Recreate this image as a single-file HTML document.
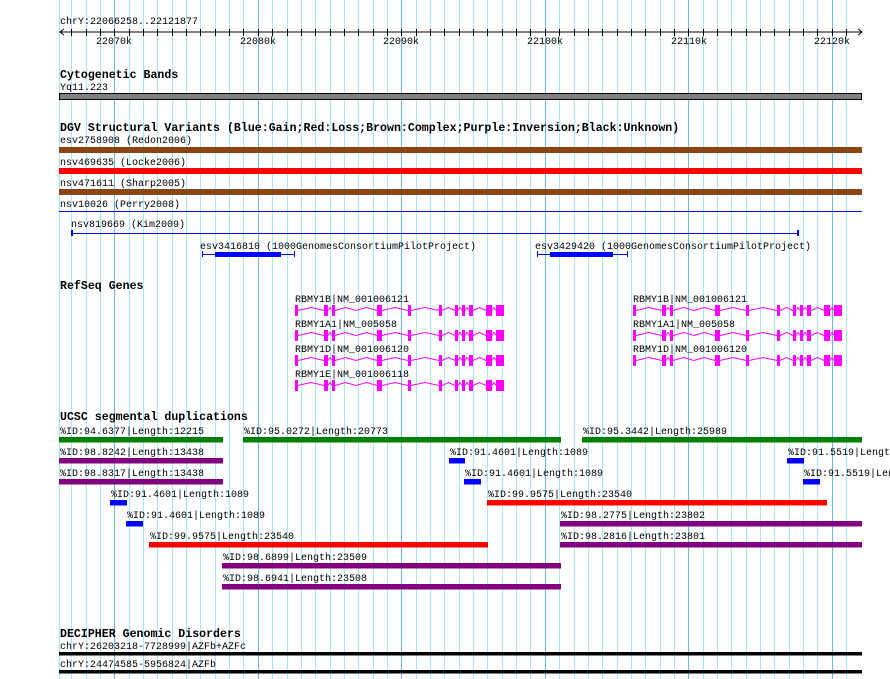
<!DOCTYPE html>
<html><head><meta charset="utf-8"><style>
html,body{margin:0;padding:0;background:#fff;width:890px;height:679px;overflow:hidden}
svg{display:block}
text{font-family:"Liberation Mono",monospace;font-size:10px;fill:#000}
.b{font-weight:bold;font-size:11.6px}
</style></head><body>
<svg id="s" width="890" height="679" xmlns="http://www.w3.org/2000/svg">
<g id="grid"></g>
<text x="60" y="24">chrY:22066258..22121877</text>
<line x1="60" y1="32" x2="862" y2="32" stroke="#000"/>
<polyline points="64,29 60,32 64,35" fill="none" stroke="#000"/>
<polyline points="858,29 862,32 858,35" fill="none" stroke="#000"/>
<g id="ticks"></g>
<text x="96" y="44">22070k</text><text x="240" y="44">22080k</text><text x="383" y="44">22090k</text>
<text x="527" y="44">22100k</text><text x="671" y="44">22110k</text><text x="814" y="44">22120k</text>

<text class="b" x="60" y="78">Cytogenetic Bands</text>
<text x="60" y="90">Yq11.223</text>
<rect x="59.5" y="93.5" width="802" height="6" fill="#808080" stroke="#000"/>

<text class="b" x="60" y="131">DGV Structural Variants (Blue:Gain;Red:Loss;Brown:Complex;Purple:Inversion;Black:Unknown)</text>
<text x="60" y="143">esv2758908 (Redon2006)</text>
<rect x="59" y="147" width="803" height="6" fill="#8b4513"/>
<text x="60" y="165">nsv469635 (Locke2006)</text>
<rect x="59" y="168" width="803" height="6" fill="#ff0000"/>
<text x="60" y="186">nsv471611 (Sharp2005)</text>
<rect x="59" y="189" width="803" height="6" fill="#8b4513"/>
<text x="60" y="207">nsv10026 (Perry2008)</text>
<rect x="59" y="211" width="803" height="1" fill="#0000ff"/>
<text x="71" y="227">nsv819669 (Kim2009)</text>
<rect x="71" y="233" width="727" height="1" fill="#0000ff"/>
<rect x="71" y="230" width="2" height="6" fill="#0000ff"/><rect x="797" y="230" width="2" height="6" fill="#0000ff"/>
<text x="200" y="249">esv3416810 (1000GenomesConsortiumPilotProject)</text>
<rect x="202" y="254" width="93" height="1" fill="#0000ff"/>
<rect x="202" y="251" width="1" height="6" fill="#0000ff"/><rect x="294" y="251" width="1" height="6" fill="#0000ff"/>
<rect x="215" y="252" width="66" height="5" fill="#0000ff"/>
<text x="535" y="249">esv3429420 (1000GenomesConsortiumPilotProject)</text>
<rect x="537" y="254" width="91" height="1" fill="#0000ff"/>
<rect x="537" y="251" width="1" height="6" fill="#0000ff"/><rect x="627" y="251" width="1" height="6" fill="#0000ff"/>
<rect x="550" y="252" width="63" height="5" fill="#0000ff"/>

<text class="b" x="60" y="289">RefSeq Genes</text>
<text x="295" y="302">RBMY1B|NM_001006121</text>
<text x="295" y="327">RBMY1A1|NM_005058</text>
<text x="295" y="352">RBMY1D|NM_001006120</text>
<text x="295" y="377">RBMY1E|NM_001006118</text>
<text x="633" y="302">RBMY1B|NM_001006121</text>
<text x="633" y="327">RBMY1A1|NM_005058</text>
<text x="633" y="352">RBMY1D|NM_001006120</text>
<g id="genes"></g>

<text class="b" x="60" y="420">UCSC segmental duplications</text>
<g id="sd"></g>

<text class="b" x="60" y="637">DECIPHER Genomic Disorders</text>
<text x="60" y="649">chrY:26203218-7728999|AZFb+AZFc</text>
<rect x="59" y="652" width="803" height="3.5" fill="#000"/>
<text x="60" y="667">chrY:24474585-5956824|AZFb</text>
<rect x="59" y="670" width="803" height="3.5" fill="#000"/>
</svg>
<script>
var NS="http://www.w3.org/2000/svg";
function el(p,t,a){var e=document.createElementNS(NS,t);for(var k in a)e.setAttribute(k,a[k]);document.getElementById(p).appendChild(e);return e;}
el("grid","rect",{x:59,y:0,width:1,height:679,fill:"#9eeaee"});
for(var k=-3;k<=51;k++){var x=114.3+14.35*k;if(x>850)break;var maj=(k%10===0);
 el("grid","rect",{x:Math.round(x),y:0,width:1,height:679,fill:maj?"#6ab8e8":"#a4eaee"});
 el("ticks","rect",{x:Math.round(x),y:29,width:1,height:7,fill:"#000"});}
var ex=[[0,3],[29,33],[37,40],[82,87],[113,116],[144,147],[160,163],[167,170],[174,178],[191,194],[194,197],[201,209]];
function gene(x0,y){
 for(var i=0;i<ex.length;i++){el("genes","rect",{x:x0+ex[i][0],y:y-5,width:ex[i][1]-ex[i][0],height:11,fill:"#ff00ff"});
  if(i<ex.length-1){var a=x0+ex[i][1],b=x0+ex[i+1][0];if(b-a<2)continue;var n=Math.max(1,Math.round((b-a)/22)),pts=[];var w=(b-a)/n;
   for(var j=0;j<n;j++){pts.push((a+j*w)+","+(y+0.5));pts.push((a+j*w+w/2)+","+(y-2.5));}pts.push(b+","+(y+0.5));
   el("genes","polyline",{points:pts.join(" "),fill:"none",stroke:"#ff00ff","stroke-width":1});}}
}
[310,335,360,385].forEach(function(y){gene(295,y);});
[310,335,360].forEach(function(y){gene(633,y);});
var G="#008000",P="#800080",B="#0000ff",R="#ff0000";
var sd=[
[0,59,223,G,"%ID:94.6377|Length:12215"],[0,243,561,G,"%ID:95.0272|Length:20773"],[0,582,862,G,"%ID:95.3442|Length:25989"],
[1,59,223,P,"%ID:98.8242|Length:13438"],[1,449,465,B,"%ID:91.4601|Length:1089"],[1,787,804,B,"%ID:91.5519|Length:1090"],
[2,59,223,P,"%ID:98.8317|Length:13438"],[2,464,481,B,"%ID:91.4601|Length:1089"],[2,803,820,B,"%ID:91.5519|Length:1090"],
[3,110,127,B,"%ID:91.4601|Length:1089"],[3,487,827,R,"%ID:99.9575|Length:23540"],
[4,126,143,B,"%ID:91.4601|Length:1089"],[4,560,862,P,"%ID:98.2775|Length:23802"],
[5,149,488,R,"%ID:99.9575|Length:23540"],[5,560,862,P,"%ID:98.2816|Length:23801"],
[6,222,561,P,"%ID:98.6899|Length:23509"],[7,222,561,P,"%ID:98.6941|Length:23508"]];
sd.forEach(function(s){var y=437+21*s[0];el("sd","rect",{x:s[1],y:y,width:s[2]-s[1],height:5.5,fill:s[3]});
 var t=el("sd","text",{x:s[1]+1,y:y-3});t.textContent=s[4];});
</script>
</body></html>
